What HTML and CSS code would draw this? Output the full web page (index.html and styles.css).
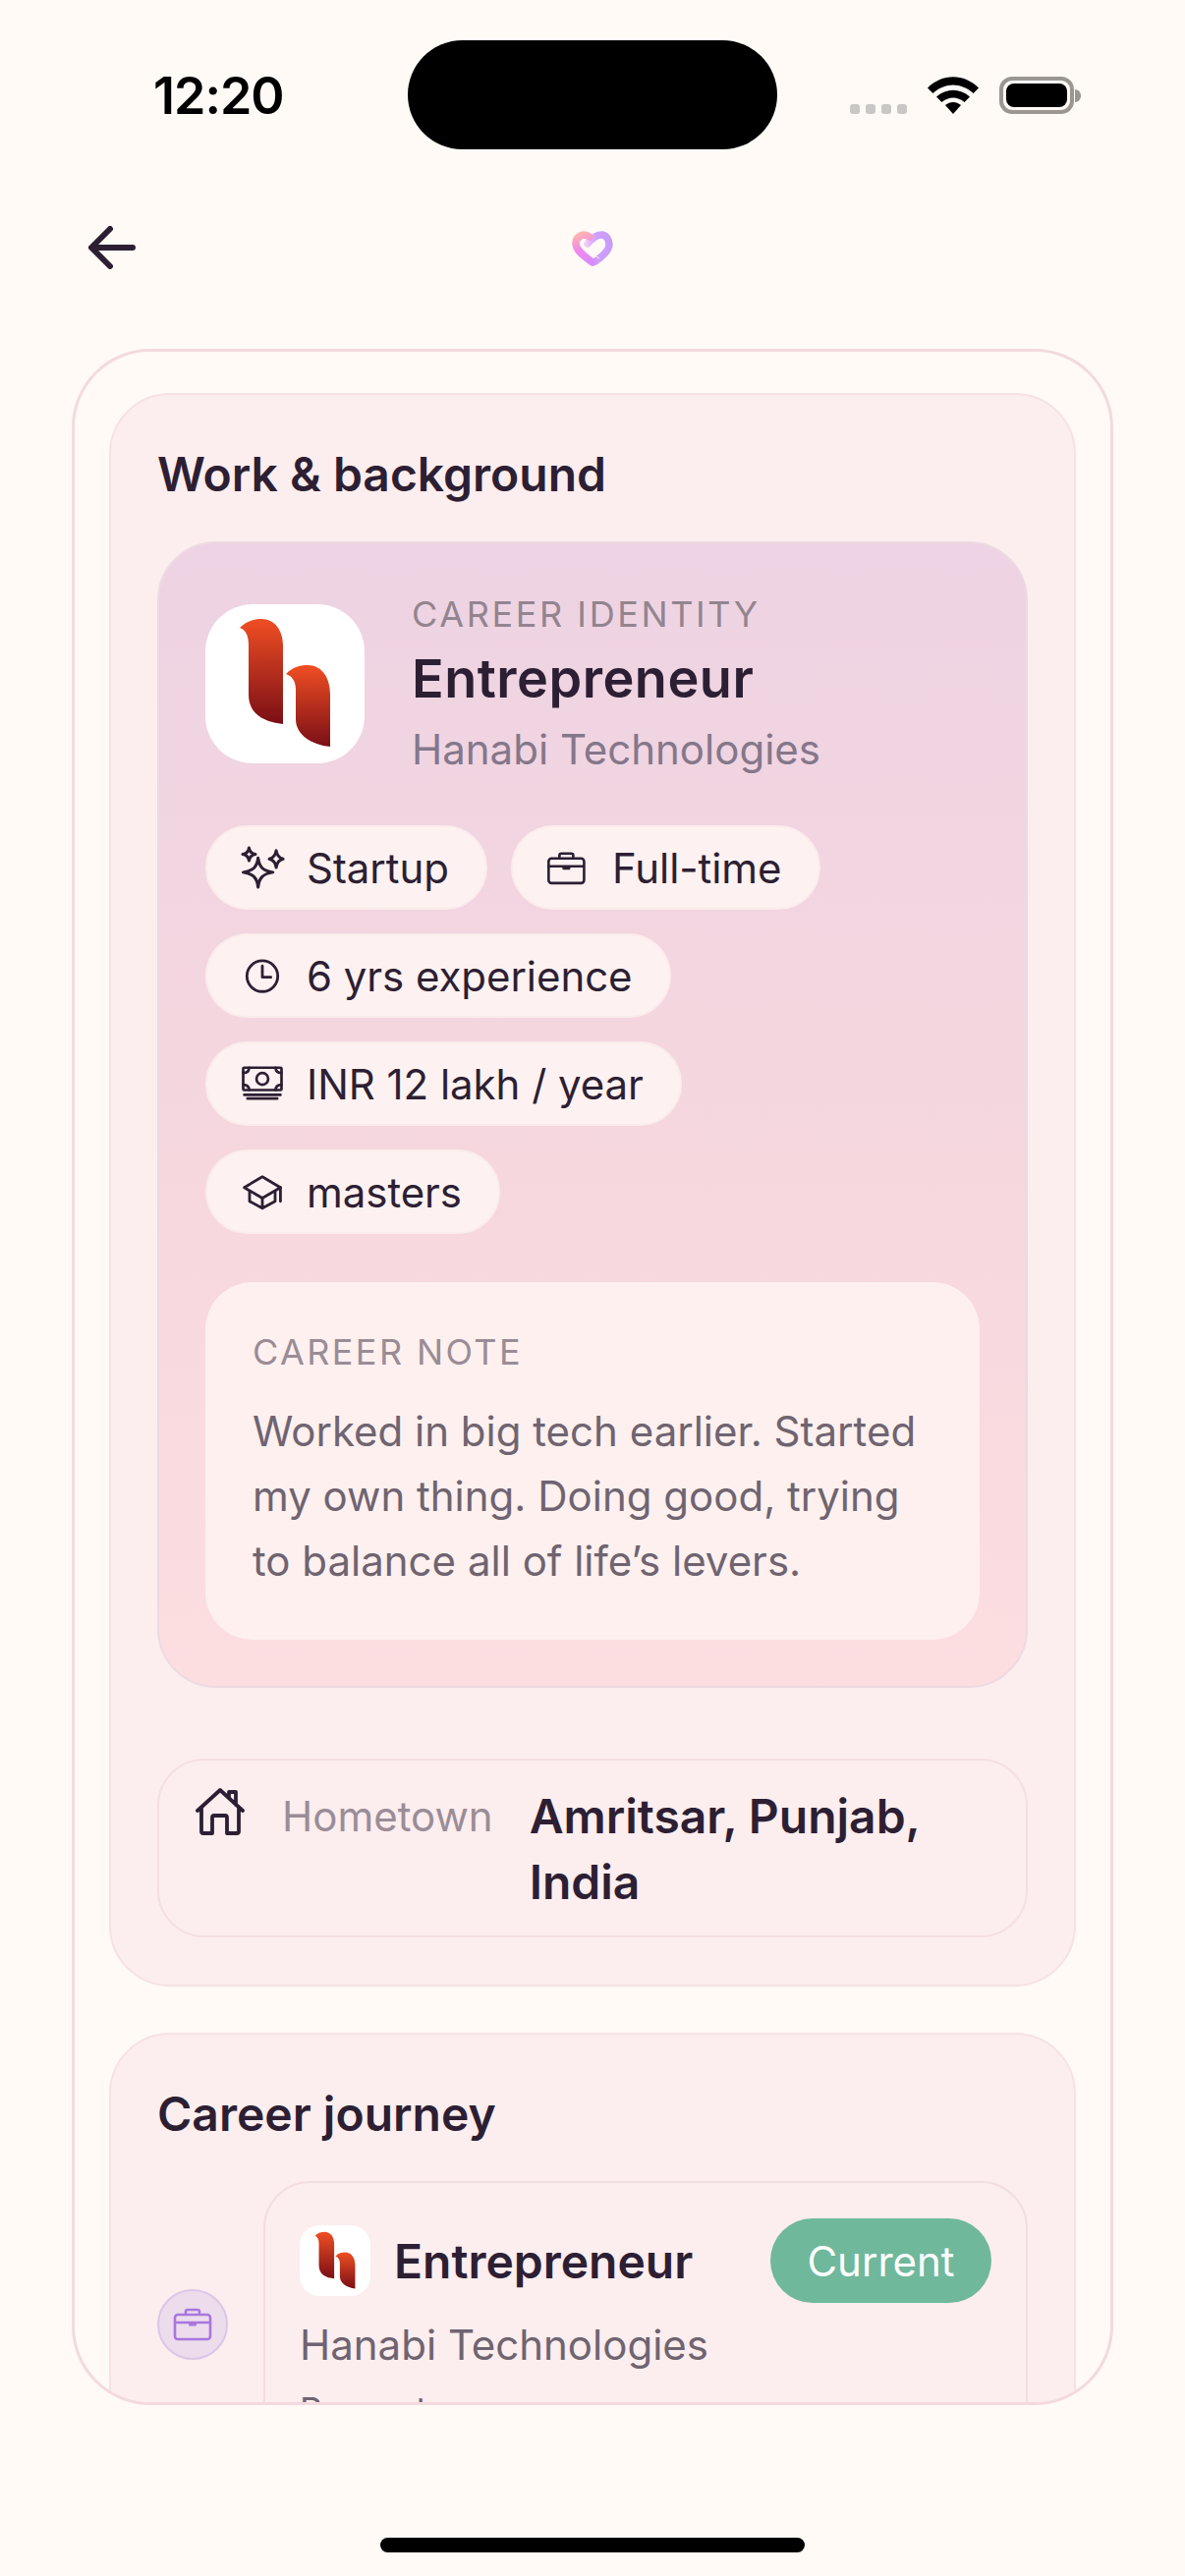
FILE: index.html
```html
<!DOCTYPE html>
<html lang="en">
<head>
<meta charset="utf-8">
<title>Work &amp; background</title>
<link rel="stylesheet" href="styles.css">
</head>
<body>
<div class="screen">
  <svg width="0" height="0" class="defs">
    <defs>
      <linearGradient id="logoA" x1="0" y1="0" x2="0" y2="1"><stop offset="0" stop-color="#f04e23"/><stop offset="1" stop-color="#7a0f16"/></linearGradient>
      <linearGradient id="heartL" gradientUnits="userSpaceOnUse" x1="8" y1="2" x2="20" y2="32"><stop offset="0" stop-color="#ffb5ab"/><stop offset="0.5" stop-color="#f088ee"/><stop offset="1" stop-color="#d98cf9"/></linearGradient>
      <linearGradient id="heartR" gradientUnits="userSpaceOnUse" x1="14" y1="14" x2="40" y2="14"><stop offset="0" stop-color="#f5cdf8"/><stop offset="0.4" stop-color="#cf9ffb"/><stop offset="1" stop-color="#c89cfb"/></linearGradient>
      <symbol id="logo" viewBox="0 0 162 162">
        <path fill="url(#logoA)" d="M35 24C42 17 50 15 57 15C70 15 79 26 79 42V122C60 120 44 112 44 92V42C44 32 41 26 35 24Z"/>
        <path fill="url(#logoA)" d="M82 71C89 64 96 62 104 62C118 62 127 74 127 92V145C108 143 92 133 92 117V87C92 78 88 73 82 71Z"/>
      </symbol>
      <symbol id="case" viewBox="0 0 40 34">
        <path fill="none" stroke="currentColor" stroke-width="2.6" stroke-linejoin="round" stroke-linecap="round" d="M5 7H35A3 3 0 0 1 38 10V29A3 3 0 0 1 35 32H5A3 3 0 0 1 2 29V10A3 3 0 0 1 5 7ZM13 7V4A2 2 0 0 1 15 2H25A2 2 0 0 1 27 4V7M2 15H38"/>
        <path fill="currentColor" d="M16 15H24V17.5A1 1 0 0 1 23 18.5H17A1 1 0 0 1 16 17.5Z"/>
      </symbol>
    </defs>
  </svg>

  <header class="status">
    <span class="time">12:20</span>
    <div class="island"></div>
    <div class="status-icons">
      <div class="dots"><i></i><i></i><i></i><i></i></div>
      <svg class="wifi" viewBox="0 0 52 38" width="52" height="38">
        <path d="M0 11.5C15 -3.500 37 -3.500 52 11.5L46.600 17C34 5.500 18 5.500 5.400 17Z"/>
        <path d="M9 20.500C19 11.500 33 11.500 43 20.500L37.600 26C30.500 20 21.500 20 14.400 26Z"/>
        <path d="M18 29C23 25 29 25 34 29L26 38Z"/>
      </svg>
      <div class="battery"><div class="battery-fill"></div></div>
      <div class="battery-nub"></div>
    </div>
  </header>

  <nav class="topnav">
    <svg class="back" viewBox="0 0 48 44" width="48" height="44"><path d="M45 22H4M22 3L3 22L22 41" fill="none" stroke="#2d1f33" stroke-width="6" stroke-linecap="round" stroke-linejoin="round"/></svg>
    <svg class="heart" viewBox="0 0 42 36" width="42" height="36">
      <path fill="none" stroke="url(#heartR)" stroke-width="7.500" stroke-linecap="round" d="M16 13C20 8 25 4 30 4C35 4 38 9 38 14C38 20 31 26 24 31"/>
      <path fill="none" stroke="url(#heartL)" stroke-width="7.500" stroke-linecap="round" d="M18 6C12 2 4 5 4 13C4 20 13 26 21 32"/>
      <path fill="none" stroke="#fdeefc" stroke-width="1" d="M23 25L28 28"/>
    </svg>
  </nav>

  <main class="frame">
    <section class="panel">
      <h2 class="panel-title">Work &amp; background</h2>
      <div class="career">
        <div class="identity">
          <div class="logo-tile"><svg class="logo-big"><use href="#logo"/></svg></div>
          <div class="identity-text">
            <div class="eyebrow">CAREER IDENTITY</div>
            <div class="role">Entrepreneur</div>
            <div class="company">Hanabi Technologies</div>
          </div>
        </div>
        <div class="chips">
          <div class="chip">
            <svg class="chip-icon" viewBox="0 0 48 48"><g fill="none" stroke="currentColor" stroke-width="2.800" stroke-linejoin="round"><path d="M20 15C21 23 24 27 34 28.500C24 30 21 34 20 42.500C19 34 16 30 6 28.500C16 27 19 23 20 15Z"/><path d="M11.500 5.500C12 9 14 11 17.500 11.500C14 12 12 14 11.500 17.500C11 14 9 12 5.500 11.500C9 11 11 9 11.500 5.500Z"/><path d="M37 8C37.500 12 39.500 15 43.500 16C39.500 17 37.500 20 37 24C36.500 20 34.500 17 30.500 16C34.500 15 36.500 12 37 8Z"/></g></svg>
            <span>Startup</span>
          </div>
          <div class="chip">
            <svg class="chip-icon" viewBox="0 0 48 48"><use href="#case" x="4" y="9" width="37" height="31.500"/></svg>
            <span>Full-time</span>
          </div>
          <div class="chip">
            <svg class="chip-icon" viewBox="0 0 48 48"><g fill="none" stroke="currentColor" stroke-width="2.600" stroke-linecap="round" stroke-linejoin="round"><circle cx="24" cy="24.500" r="14.500"/><path d="M24 15V25.500H32"/></g></svg>
            <span>6 yrs experience</span>
          </div>
          <div class="chip">
            <svg class="chip-icon" viewBox="0 0 48 48"><g fill="none" stroke="currentColor" stroke-width="2.500" stroke-linecap="round" stroke-linejoin="round"><rect x="6" y="9" width="36" height="21" rx="1"/><circle cx="24" cy="19.500" r="5.500"/><path d="M6 14C9.500 14 11.500 12.500 11.500 9M36.500 9C36.500 12.500 38.500 14 42 14M6 25C9.500 25 11.500 26.500 11.500 30M42 25C38.500 25 36.500 26.500 36.500 30M7 34.500H41M10 38H38"/></g></svg>
            <span>INR 12 lakh / year</span>
          </div>
          <div class="chip">
            <svg class="chip-icon" viewBox="0 0 48 48"><g fill="none" stroke="currentColor" stroke-width="2.600" stroke-linecap="round" stroke-linejoin="round"><path d="M24 10L41 20L24 30L7 20Z"/><path d="M12 24V33L24 39.500L36 33V24M24 30V39.500M41 20V33"/></g></svg>
            <span>masters</span>
          </div>
        </div>
        <div class="note">
          <div class="note-label">CAREER NOTE</div>
          <p class="note-text">Worked in big tech earlier. Started my own thing. Doing good, trying to balance all of life’s levers.</p>
        </div>
      </div>
      <div class="home-row">
        <svg class="home-icon" viewBox="0 0 50 48" width="50" height="48"><path d="M2 23L25 2L48 23M6 20V44A2 2 0 0 0 8 46H17V30A2 2 0 0 1 19 28H30A2 2 0 0 1 32 30V46H42A2 2 0 0 0 44 44V20M34 10V4H41V17" fill="none" stroke="#2d1f33" stroke-width="3.800" stroke-linecap="round" stroke-linejoin="round"/></svg>
        <span class="home-label">Hometown</span>
        <span class="home-value">Amritsar, Punjab, India</span>
      </div>
    </section>

    <section class="panel panel-journey">
      <h2 class="panel-title">Career journey</h2>
      <div class="timeline">
        <div class="tl-dot"><svg class="tl-icon"><use href="#case"/></svg></div>
        <article class="job">
          <div class="job-head">
            <div class="logo-mini"><svg class="logo-small"><use href="#logo"/></svg></div>
            <div class="job-role">Entrepreneur</div>
            <div class="current">Current</div>
          </div>
          <div class="job-company">Hanabi Technologies</div>
          <div class="job-date">Present</div>
        </article>
      </div>
    </section>
  </main>

  <div class="home-bar"></div>
</div>
</body>
</html>
```

FILE: styles.css
```css
* { box-sizing: border-box; }
html, body { margin: 0; padding: 0; }
body {
  background: #fffaf6;
  color: #2d1f33;
  font-family: Inter, "Liberation Sans", sans-serif;
}
.screen { width: 1206px; height: 2622px; overflow: hidden; display: flex; flex-direction: column; }
.defs { display: block; height: 0; }

/* status bar */
.status { height: 152px; padding-top: 41px; display: grid; grid-template-columns: 415px 376px 1fr; align-items: stretch; }
.time { font-size: 52px; font-weight: 600; letter-spacing: -1px; color: #000; padding-left: 156px; padding-top: 32px; line-height: 50px; }
.island { height: 111px; background: #000; border-radius: 56px; }
.status-icons { display: flex; align-items: flex-start; padding-top: 37px; padding-left: 74px; }
.dots { display: flex; gap: 6px; margin-top: 28px; }
.dots i { width: 10px; height: 10px; border-radius: 3px; background: #c9c7c5; }
.wifi { fill: #000; margin-left: 21px; }
.battery { width: 76px; height: 38px; margin-left: 21px; border: 4px solid #9c9693; border-radius: 13px; padding: 3px; }
.battery-fill { width: 100%; height: 100%; background: #000; border-radius: 8px; }
.battery-nub { width: 6px; height: 13px; margin-top: 13px; margin-left: 1px; background: #9c9693; border-radius: 0 6px 6px 0; }

/* nav */
.topnav { height: 203px; display: flex; align-items: flex-start; padding: 78px 0 0 90px; }
.heart { margin-left: 444px; margin-top: 5px; }

/* outer frame */
.frame {
  width: 1060px; height: 2093px; margin-left: 73px; flex: none;
  background: #fffaf6;
  border: 3px solid #f3dade; border-radius: 80px;
  padding: 42px 35px 0;
  overflow: hidden;
  display: flex; flex-direction: column; gap: 47px;
}
.panel { flex: none; background: #fcedee; border: 2px solid #f6e2e4; border-radius: 62px; padding: 52px 47px 48px; }
.panel-title { margin: 0; font-size: 48px; line-height: 58px; font-weight: 600; color: #2d1f33; }

/* career card */
.career {
  margin-top: 39px;
  padding: 62px 47px 47px;
  border: 2px solid #eddae2; border-radius: 60px;
  background: linear-gradient(180deg, #edd3e3 0%, #f6d7de 55%, #fcdee1 100%);
}
.identity { display: flex; gap: 48px; align-items: flex-start; }
.logo-tile { width: 162px; height: 162px; background: #fff; border-radius: 48px; flex: none; }
.logo-big { display: block; width: 162px; height: 162px; }
.identity-text { margin-top: -12px; }
.eyebrow { font-size: 36px; line-height: 44px; letter-spacing: 2.6px; color: #93848f; }
.role { font-size: 54px; line-height: 66px; font-weight: 600; letter-spacing: 0.5px; color: #2d1f33; margin-top: 11px; }
.company { font-size: 42px; line-height: 62px; color: #85778a; margin-top: 8px; margin-bottom: -26px; }

.chips { margin-top: 63px; display: flex; flex-wrap: wrap; gap: 24px; }
.chip {
  height: 86px; display: flex; align-items: center; gap: 19px;
  padding: 0 37px 0 30px;
  background: #fdf2f1; border: 2px solid #fbecec; border-radius: 43px;
  font-size: 42px; letter-spacing: -0.05px; color: #2d1f33; white-space: nowrap;
}
.chip-icon { width: 52px; height: 52px; flex: none; color: #2d1f33; }

.note { margin-top: 49px; padding: 49px 47px 47px 48px; background: #fdf0ef; border-radius: 48px; }
.note-label { font-size: 36px; line-height: 44px; letter-spacing: 2.4px; color: #9a8c95; }
.note-text { margin: 26px 0 0; font-size: 42px; line-height: 66px; color: #6f6470; }

/* hometown */
.home-row {
  margin-top: 72px; min-height: 182px; display: flex; align-items: flex-start;
  padding: 26px 50px 0 37px;
  border: 2px solid #f4dfe1; border-radius: 48px;
}
.home-icon { flex: none; margin-top: 2px; }
.home-label { margin-left: 38px; flex: none; font-size: 42px; line-height: 62px; color: #9a8d97; }
.home-value { margin-left: 37px; font-size: 48px; line-height: 67px; font-weight: 600; color: #2d1f33; margin-top: -3px; }

/* journey */
.panel-journey { padding-top: 52px; }
.timeline { display: flex; align-items: flex-start; margin-top: 39px; }
.tl-dot {
  width: 72px; height: 72px; flex: none; margin-top: 110px; margin-right: 36px;
  border-radius: 50%; background: #ecdcec; border: 2px solid #dcc6e8;
  display: flex; align-items: center; justify-content: center;
}
.tl-icon { width: 40px; height: 34px; color: #a877dd; }
.job { flex: 1; border: 2px solid #f2dde1; border-radius: 48px; padding: 36px 35px 36px 35px; }
.job-head { display: flex; align-items: center; height: 86px; }
.logo-mini { width: 72px; height: 72px; background: #fff; border-radius: 20px; flex: none; }
.logo-small { display: block; width: 72px; height: 72px; }
.job-role { margin-left: 24px; font-size: 48px; font-weight: 600; color: #2d1f33; flex: 1; }
.current { width: 225px; height: 86px; border-radius: 43px; background: #6fb89c; color: #fff; font-size: 42px; display: flex; align-items: center; justify-content: center; }
.job-company { margin-top: 13px; font-size: 42px; line-height: 60px; color: #6f6470; }
.job-date { margin-top: 6px; font-size: 36px; line-height: 60px; color: #6f6470; }

.home-bar { flex: none; width: 432px; height: 15px; margin: 135px 0 0 387px; background: #000; border-radius: 8px; }
```
